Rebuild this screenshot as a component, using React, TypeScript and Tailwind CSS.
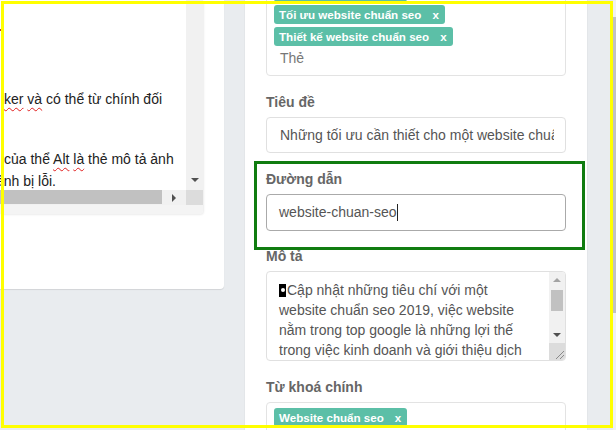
import React from "react";

function Tag({ label }: { label: string }) {
  return (
    <div className="h-[19px] flex items-center pl-[5px] pr-[6px] bg-[#5cbfa7] text-white font-bold text-[11.6px] rounded-[3px] leading-none">
      <span>{label}</span>
      <span className="ml-[11px]">x</span>
    </div>
  );
}

function Label({ children }: { children: React.ReactNode }) {
  return <div className="h-[20px] leading-[20px] text-[14px] font-bold text-[#666] mb-[5px]">{children}</div>;
}

function Arrow({ dir }: { dir: "up" | "down" | "right" }) {
  const pts = dir === "up" ? "0,4 4,0 8,4" : dir === "down" ? "0,0 8,0 4,4" : "0,0 4,4 0,8";
  const w = dir === "right" ? 4 : 8;
  const h = dir === "right" ? 8 : 4;
  return (
    <svg width={w} height={h} viewBox={`0 0 ${w} ${h}`}>
      <polygon points={pts} fill={dir === "up" ? "#a3a3a3" : "#505050"} />
    </svg>
  );
}

const squiggle = "underline decoration-wavy decoration-[#e02020] decoration-1 underline-offset-[3px]";

export default function App() {
  return (
    <div className="relative w-[616px] h-[430px] overflow-hidden bg-[#e9ecef] font-['Liberation_Sans',Arial,sans-serif] flex">
      {/* Left card with editor */}
      <div className="w-[224px] shrink-0">
        <div className="h-[289px] bg-white rounded-br-[4px] shadow-[0_1px_1px_rgba(0,0,0,0.1)] pr-[21px]">
          <div className="h-[214px] flex flex-col rounded-br-[4px] shadow-[1px_1px_2px_rgba(0,0,0,0.08)] overflow-hidden">
            <div className="h-[190px] flex">
              <div className="flex-1 overflow-hidden text-[14px] text-[#222] leading-[22px] pt-[88px] whitespace-nowrap">
                <div className="pl-[4px]">
                  <span className={squiggle}>ker</span> <span className={squiggle}>và</span> có thể từ chính đối
                </div>
                <div className="pl-[4px] mt-[38px]">
                  của thể <span className={squiggle}>Alt</span> <span className={squiggle}>là</span> thẻ mô tả ảnh
                </div>
                <div className="-ml-[4px]">ảnh bị lỗi.</div>
              </div>
              <div className="w-[17px] bg-[#f1f1f1] flex flex-col justify-end items-center pb-[8px]">
                <Arrow dir="down" />
              </div>
            </div>
            <div className="h-[15px] flex bg-[#f1f1f1]">
              <div className="w-[162px] h-[14px] bg-[#c1c1c1]" />
              <div className="flex-1 flex items-center justify-center">
                <Arrow dir="right" />
              </div>
              <div className="w-[17px] bg-[#dcdcdc]" />
            </div>
            <div className="flex-1 bg-[#f4f4f4]" />
          </div>
        </div>
      </div>

      <div className="w-[21px] shrink-0" />

      {/* Right form card */}
      <div className="w-[342px] shrink-0 bg-white pl-[21px] shadow-[0_0_1px_rgba(0,0,0,0.15)]">
        <div className="w-[300px] -mt-[23px]">
          <div className="border border-[#e3e3e3] rounded-[4px] pt-[5px] pb-[7px] pl-[7px] flex flex-col items-start gap-[3px]">
            <Tag label="Website chuẩn seo" />
            <Tag label="Tối ưu website chuẩn seo" />
            <Tag label="Thiết kế website chuẩn seo" />
            <div className="h-[20px] leading-[20px] text-[14px] text-[#777] pl-[6px] -mt-[1px]">Thẻ</div>
          </div>

          <div className="mt-[16px]">
            <Label>Tiêu đề</Label>
            <div className="h-[36px] border border-[#e0e0e0] rounded-[4px] pl-[13px] pr-[11px] flex items-center text-[14px] text-[#555]">
              <div className="flex-1 whitespace-nowrap overflow-hidden">Những tối ưu cần thiết cho một website chuẩn seo</div>
            </div>
          </div>

          <div className="mt-[16px]">
            <Label>Đường dẫn</Label>
            <div className="h-[37px] border border-[#aaaaaa] rounded-[4px] px-[12px] flex items-center text-[14px] text-[#555] whitespace-nowrap">
              website-chuan-seo<span className="w-[1px] h-[17px] bg-[#222]" />
            </div>
          </div>

          <div className="mt-[15px]">
            <Label>Mô tả</Label>
            <div className="h-[90px] border border-[#e0e0e0] rounded-[4px] flex overflow-hidden">
              <div className="flex-1 pl-[12px] pt-[8px] text-[14px] leading-[20px] text-[#555] whitespace-nowrap overflow-hidden">
                <div className="flex items-center">
                  <span className="w-[7px] h-[13px] bg-black mr-[1px] flex items-center justify-center">
                    <span className="w-[4px] h-[4px] rounded-full bg-white" />
                  </span>
                  Cập nhật những tiêu chí với một
                </div>
                <div>website chuẩn seo 2019, việc website</div>
                <div>nằm trong top google là những lợi thế</div>
                <div>trong việc kinh doanh và giới thiệu dịch</div>
              </div>
              <div className="w-[16px] bg-[#f1f1f1] flex flex-col">
                <div className="h-[16px] flex items-center justify-center">
                  <Arrow dir="up" />
                </div>
                <div className="mt-[2px] mx-[2px] h-[21px] bg-[#c1c1c1]" />
                <div className="flex-1" />
                <div className="h-[16px] flex items-center justify-center">
                  <Arrow dir="down" />
                </div>
                <div className="h-[17px] bg-[#dcdcdc] flex items-end justify-end">
                  <svg width="12" height="12" viewBox="0 0 12 12">
                    <line x1="3" y1="11" x2="11" y2="3" stroke="#8a8a8a" strokeWidth="1" />
                    <line x1="7" y1="11" x2="11" y2="7" stroke="#8a8a8a" strokeWidth="1" />
                  </svg>
                </div>
              </div>
            </div>
          </div>

          <div className="mt-[16px]">
            <Label>Từ khoá chính</Label>
            <div className="h-[60px] border border-[#e3e3e3] rounded-[4px] pt-[5px] pl-[7px] flex flex-col items-start">
              <Tag label="Website chuẩn seo" />
            </div>
          </div>
        </div>
      </div>

      <div className="flex-1" />
      <div className="w-[3px] shrink-0 flex flex-col">
        <div className="h-[17px] bg-[#f1f1f1]" />
        <div className="h-[296px] bg-[#c1c1c1]" />
        <div className="flex-1 bg-[#f1f1f1]" />
      </div>

      {/* annotation overlays */}
      <div className="absolute left-0 top-[29px] w-[1px] h-[2px] bg-[#b5462a]" />
      <div className="absolute left-[1px] top-[1px] w-[612px] h-[427px] border-[3px] border-[#ffff00] pointer-events-none" />
      <div className="absolute left-[254px] top-[161px] w-[331px] h-[89px] border-[3px] border-[#107c10] pointer-events-none" />
    </div>
  );
}
